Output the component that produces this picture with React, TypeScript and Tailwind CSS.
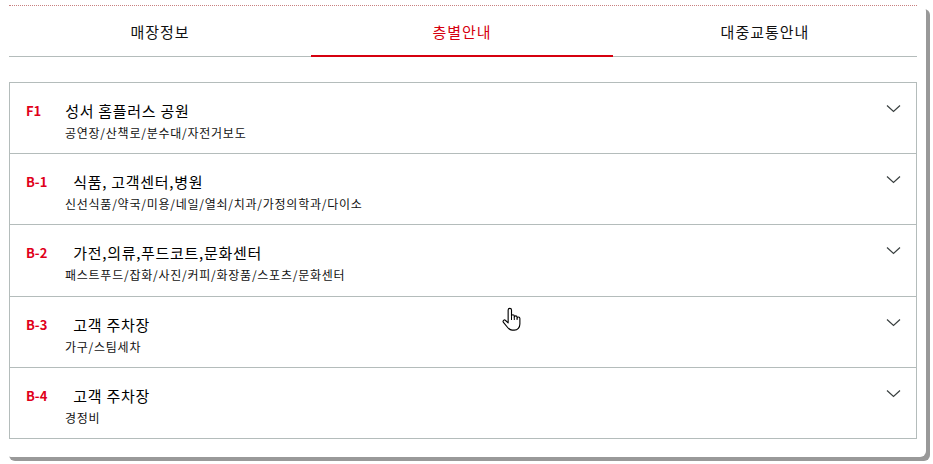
import React from "react";

const floors = [
  { label: "F1", title: "성서 홈플러스 공원", sub: "공연장/산책로/분수대/자전거보도", h: "h-[70px]" },
  { label: "B-1", title: "식품, 고객센터,병원", sub: "신선식품/약국/미용/네일/열쇠/치과/가정의학과/다이소", h: "h-[70px]" },
  { label: "B-2", title: "가전,의류,푸드코트,문화센터", sub: "패스트푸드/잡화/사진/커피/화장품/스포츠/문화센터", h: "h-[71px]" },
  { label: "B-3", title: "고객 주차장", sub: "가구/스팀세차", h: "h-[70px]" },
  { label: "B-4", title: "고객 주차장", sub: "경정비", h: "h-[70px]" },
];

function Chevron() {
  return (
    <svg width="15" height="9" viewBox="0 0 15 9" fill="none">
      <path d="M1 1.5 L7.5 7.5 L14 1.5" stroke="#3a4040" strokeWidth="1.2" />
    </svg>
  );
}

function HandCursor() {
  return (
    <svg width="19" height="25" viewBox="0 0 17 22" fill="none">
      <path
        d="M5.5 11 V2.5 a1.5 1.5 0 0 1 3 0 V8 a1.25 1.25 0 0 1 2.5 0 V9 a1.25 1.25 0 0 1 2.5 0 v1 a1.25 1.25 0 0 1 2.5 0 V15 c0 3 -2 5.5 -5 5.5 h-2 c-2 0 -3 -1 -4.5 -3 L1.3 13.5 a1.2 1.2 0 0 1 1.9 -1.6 L5.5 14 Z"
        fill="#fff"
        stroke="#000"
        strokeWidth="1"
        strokeLinejoin="round"
      />
      <path d="M8.5 8 v3.5 M11 9 v2.5 M13.5 10 v1.5" stroke="#000" strokeWidth="0.9" />
    </svg>
  );
}

export default function App() {
  return (
    <div
      className="relative w-[933px] h-[464px] bg-white overflow-hidden"
      style={{ fontFamily: '"Noto Sans CJK KR", "Noto Sans", sans-serif' }}
    >
      <div className="ml-[5px] mt-[5px] w-[921px] h-[452px] rounded-md bg-white shadow-[4px_4px_0_#999] pl-[4px] pr-[9px]">
        <div className="w-[908px] border-t border-dotted border-[#c88080]">
          <div className="flex border-b border-[#b4bcbb]">
            <div className="w-[302px] h-[51px] -mb-px border-b-2 border-transparent flex items-center justify-center pt-[4px] text-[15px] tracking-[1px] text-[#111]">
              매장정보
            </div>
            <div className="w-[302px] h-[51px] -mb-px border-b-2 border-[#d6000f] flex items-center justify-center pt-[4px] text-[15px] tracking-[1px] text-[#d6000f]">
              층별안내
            </div>
            <div className="w-[304px] h-[51px] -mb-px border-b-2 border-transparent flex items-center justify-center pt-[4px] text-[15px] tracking-[1px] text-[#111]">
              대중교통안내
            </div>
          </div>

          <div className="mt-[25px] border border-[#b4bcbb] divide-y divide-[#b4bcbb]">
            {floors.map((f) => (
              <div key={f.label} className={`flex justify-between ${f.h} box-content`}>
                <div className="pl-[16px] pt-[18px]">
                  <div className="flex items-center h-[20px]">
                    <span className={`text-[13px] font-bold text-[#e0001a] leading-5 ${f.label === "F1" ? "mr-[24px]" : "mr-[26px]"}`}>{f.label}</span>
                    <span className="text-[15px] text-[#000] leading-5 tracking-[0.7px]">{f.title}</span>
                  </div>
                  <div className="mt-[3px] pl-[39px] text-[12px] text-[#111] leading-[18px] tracking-[0.75px]">{f.sub}</div>
                </div>
                <div className="pt-[21px] pr-[15px]">
                  <Chevron />
                </div>
              </div>
            ))}
          </div>
        </div>
      </div>
      <div className="absolute left-[502px] top-[307px]">
        <HandCursor />
      </div>
    </div>
  );
}
